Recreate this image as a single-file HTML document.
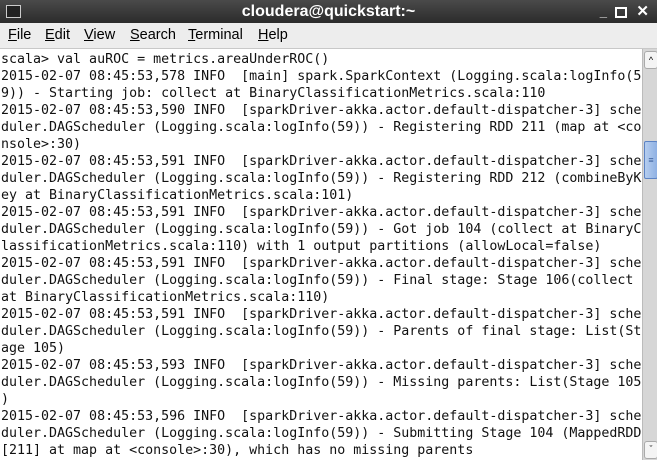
<!DOCTYPE html>
<html><head><style>
body{margin:0;width:657px;height:460px;overflow:hidden;background:#fff;position:relative;font-family:"Liberation Sans",sans-serif}
#title{position:absolute;left:0;top:0;width:657px;height:23px;background:linear-gradient(#4a4a4a,#2b2b2b);color:#fff;font-weight:bold;font-size:16px;text-align:center;line-height:23px}
#menu{position:absolute;left:0;top:23px;width:657px;height:25px;background:#ededed;border-bottom:1px solid #c8c8c8;font-size:14.5px;line-height:25px}
#menu span{position:absolute;top:0}
#term{position:absolute;left:1px;top:51px;font-family:"DejaVu Sans Mono",monospace;font-size:13.3px;line-height:17px;white-space:pre;color:#111}
#sb{position:absolute;left:642px;top:49px;width:15px;height:411px;background:#d6d6d6;border-left:1px solid #bbb}
</style></head><body>
<div id="title"><div style="position:absolute;left:6px;top:5px;width:13px;height:11px;border:1px solid #ccc;background:#222"></div>cloudera@quickstart:~<span style="position:absolute;right:50px;top:0;font-size:13px">_</span><span style="position:absolute;right:30px;top:7px;width:8px;height:7px;border:2px solid #fff;border-top-width:2px"></span><span style="position:absolute;right:8px;top:0;font-size:15px">✕</span></div>
<div id="menu"><span style="left:8px"><u>F</u>ile</span><span style="left:45px"><u>E</u>dit</span><span style="left:84px"><u>V</u>iew</span><span style="left:130px"><u>S</u>earch</span><span style="left:188px"><u>T</u>erminal</span><span style="left:258px"><u>H</u>elp</span></div>
<div id="term">scala&gt; val auROC = metrics.areaUnderROC()
2015-02-07 08:45:53,578 INFO  [main] spark.SparkContext (Logging.scala:logInfo(5
9)) - Starting job: collect at BinaryClassificationMetrics.scala:110
2015-02-07 08:45:53,590 INFO  [sparkDriver-akka.actor.default-dispatcher-3] sche
duler.DAGScheduler (Logging.scala:logInfo(59)) - Registering RDD 211 (map at &lt;co
nsole&gt;:30)
2015-02-07 08:45:53,591 INFO  [sparkDriver-akka.actor.default-dispatcher-3] sche
duler.DAGScheduler (Logging.scala:logInfo(59)) - Registering RDD 212 (combineByK
ey at BinaryClassificationMetrics.scala:101)
2015-02-07 08:45:53,591 INFO  [sparkDriver-akka.actor.default-dispatcher-3] sche
duler.DAGScheduler (Logging.scala:logInfo(59)) - Got job 104 (collect at BinaryC
lassificationMetrics.scala:110) with 1 output partitions (allowLocal=false)
2015-02-07 08:45:53,591 INFO  [sparkDriver-akka.actor.default-dispatcher-3] sche
duler.DAGScheduler (Logging.scala:logInfo(59)) - Final stage: Stage 106(collect
at BinaryClassificationMetrics.scala:110)
2015-02-07 08:45:53,591 INFO  [sparkDriver-akka.actor.default-dispatcher-3] sche
duler.DAGScheduler (Logging.scala:logInfo(59)) - Parents of final stage: List(St
age 105)
2015-02-07 08:45:53,593 INFO  [sparkDriver-akka.actor.default-dispatcher-3] sche
duler.DAGScheduler (Logging.scala:logInfo(59)) - Missing parents: List(Stage 105
)
2015-02-07 08:45:53,596 INFO  [sparkDriver-akka.actor.default-dispatcher-3] sche
duler.DAGScheduler (Logging.scala:logInfo(59)) - Submitting Stage 104 (MappedRDD
[211] at map at &lt;console&gt;:30), which has no missing parents</div>
<div id="sb">
<div style="position:absolute;left:1px;top:2px;width:12px;height:16px;background:#f4f4f4;border:1px solid #aaa;border-radius:3px;font-size:9px;text-align:center;line-height:16px">^</div>
<div style="position:absolute;left:1px;top:92px;width:12px;height:36px;background:linear-gradient(90deg,#b5cdef,#8fb1e3);border:1px solid #5c83c4;border-radius:2px;font-size:9px;color:#3a5f9c;text-align:center;line-height:36px">≡</div>
<div style="position:absolute;left:1px;top:392px;width:12px;height:16px;background:#f4f4f4;border:1px solid #aaa;border-radius:3px;font-size:9px;text-align:center;line-height:14px">ˇ</div>
</div>
</body></html>
